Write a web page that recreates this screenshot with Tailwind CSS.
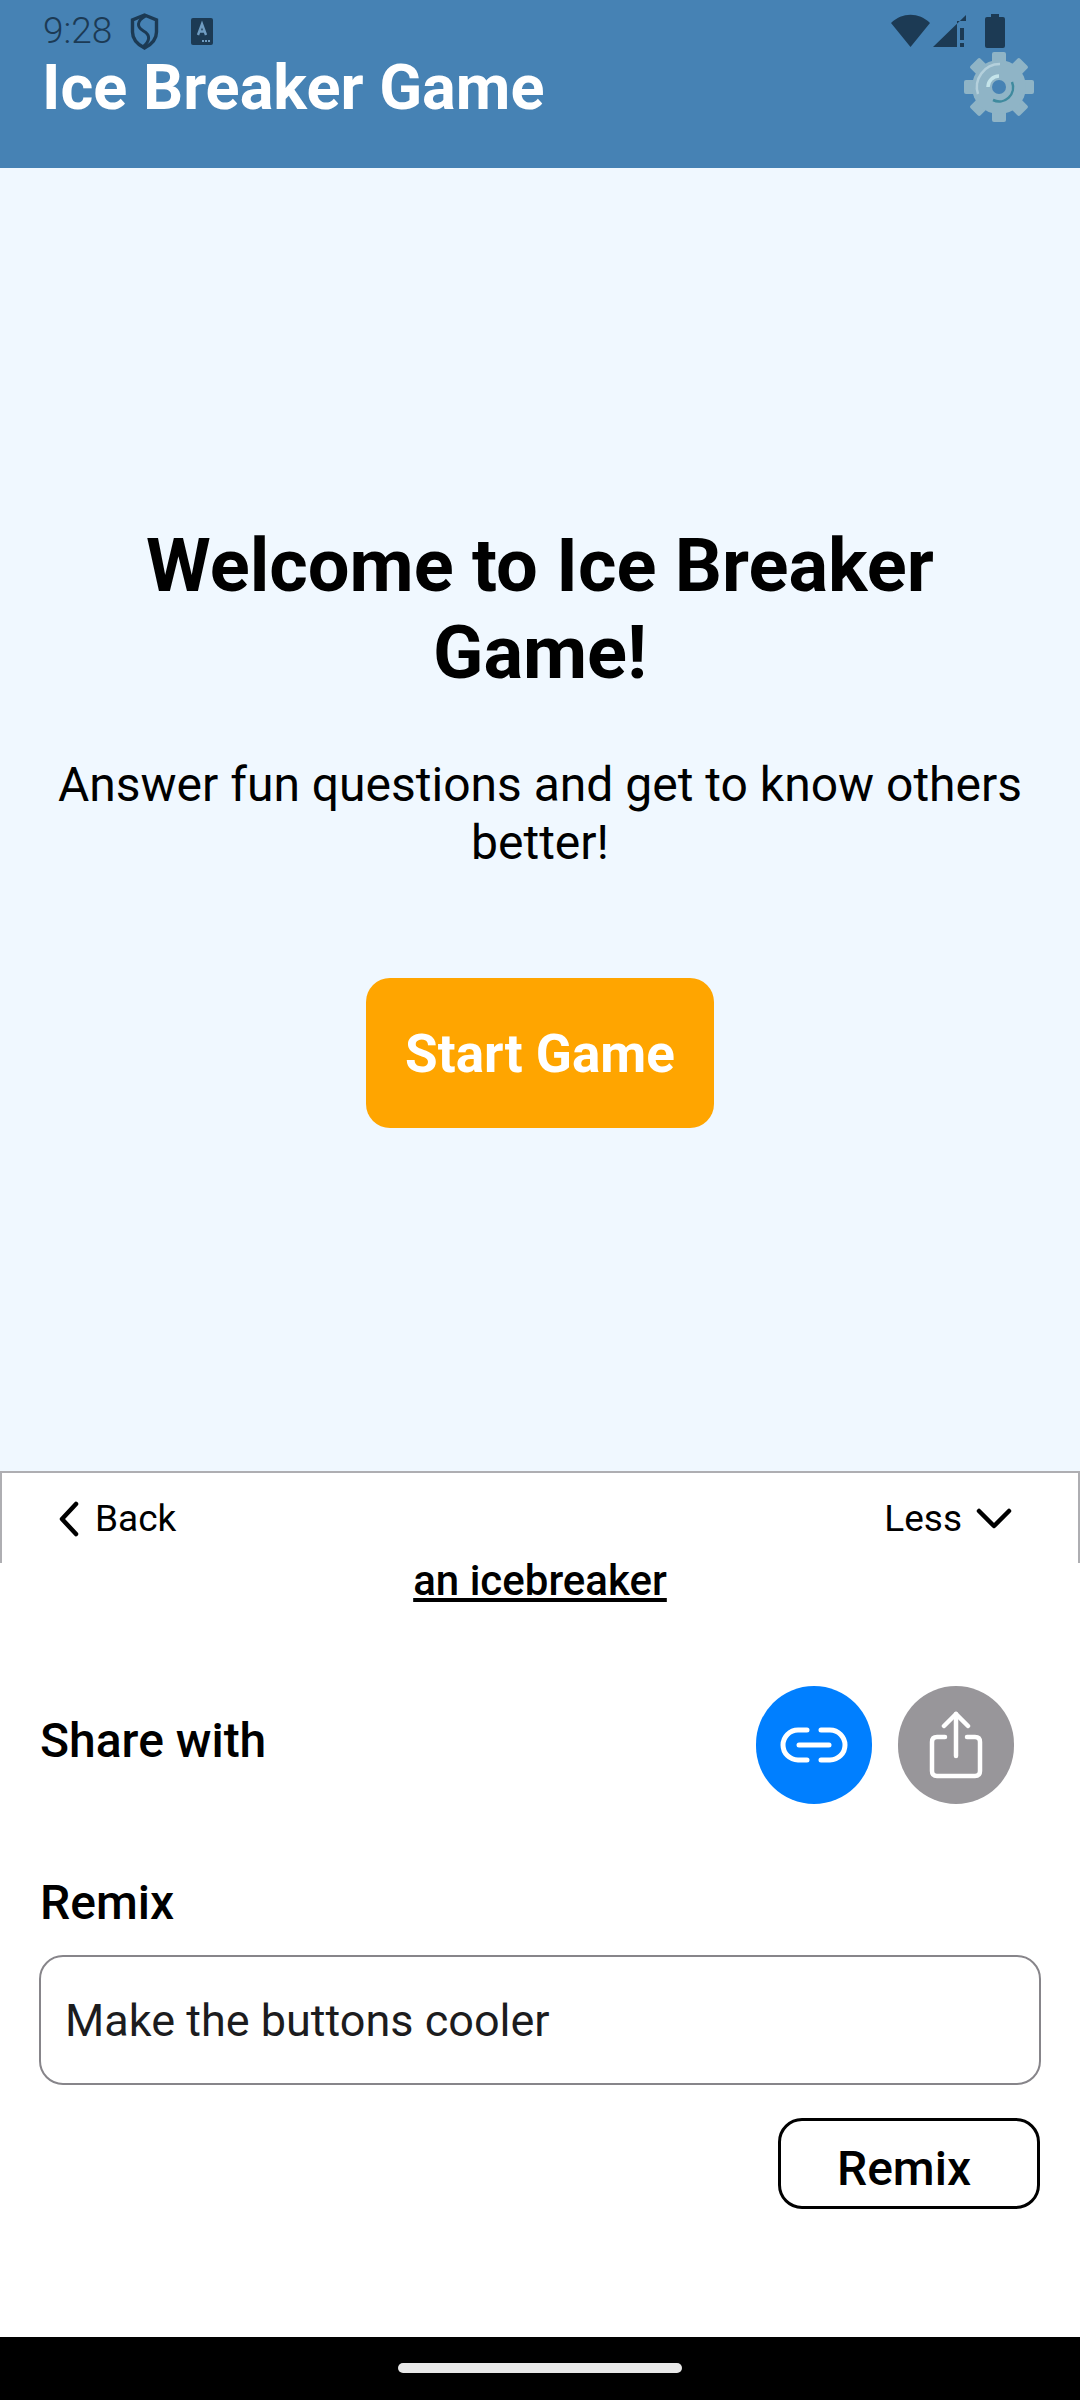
<!DOCTYPE html>
<html>
<head>
<meta charset="utf-8">
<script src="https://cdn.jsdelivr.net/npm/@tailwindcss/browser@4"></script>
</head>
<body class="m-0">
<div class="relative w-[1080px] h-[2400px] flex flex-col bg-white overflow-hidden font-['Roboto',sans-serif] text-black">
  <!-- status bar overlay -->
  <div class="absolute top-0 left-0 w-full h-[60px] text-[#1c3a54]">
    <span class="absolute left-[43px] top-[11px] text-[37px] leading-[40px] font-[350]">9:28</span>
    <svg class="absolute left-[130px] top-[13px]" width="29" height="37" viewBox="0 0 28 37" fill="none" stroke="#1c3a54" stroke-width="3.4"><path d="M14 2 L26 7 V19 C26 27 20 32 14 35 C8 32 2 27 2 19 V7 Z"/><path d="M15 3 C6 8 6 14 13 18 C20 22 20 28 12 34" stroke-width="3"/></svg>
    <svg class="absolute left-[190px] top-[18px]" width="24" height="28" viewBox="0 0 22 28"><rect width="22" height="27" rx="2" fill="#1c3a54"/><path d="M7 17 L11 6 L15 17 M8 13.5 H14" stroke="#6f9cc2" stroke-width="2.4" fill="none"/><rect x="11" y="22" width="2" height="2" fill="#6f9cc2"/><rect x="14" y="22" width="2" height="2" fill="#6f9cc2"/><rect x="17" y="22" width="2" height="2" fill="#6f9cc2"/></svg>
    <svg class="absolute left-[890px] top-[13px]" width="42" height="35" viewBox="0 0 42 35"><path d="M1 10 C12 -1 29 -1 40 10 L20.5 34 Z" fill="#1c3a54"/></svg>
    <svg class="absolute left-[932px] top-[13px]" width="36" height="36" viewBox="0 0 36 36"><path d="M1 34 L34 2 V8 H25 V34 Z" fill="#1c3a54"/><rect x="28" y="15" width="4" height="12" fill="#1c3a54"/><rect x="28" y="30" width="4" height="4" fill="#1c3a54"/></svg>
    <svg class="absolute left-[984px] top-[13px]" width="22" height="36" viewBox="0 0 22 36"><path d="M7 1 H15 V4 H19 Q21 4 21 6 V33 Q21 35 19 35 H3 Q1 35 1 33 V6 Q1 4 3 4 H7 Z" fill="#1c3a54"/></svg>
  </div>

  <!-- header -->
  <header class="h-[168px] shrink-0 bg-[#4682b4] flex justify-between items-start pl-[42px] pr-[46px] pt-[52px]">
    <h1 class="text-[63px] leading-[72px] font-bold text-white m-0">Ice Breaker Game</h1>
    <svg width="70" height="70" viewBox="0 0 70 70">
      <g fill="#8fb4c6">
        <rect x="28" y="0" width="14" height="70" rx="2"/>
        <rect x="28" y="0" width="14" height="70" rx="2" transform="rotate(45 35 35)"/>
        <rect x="28" y="0" width="14" height="70" rx="2" transform="rotate(90 35 35)"/>
        <rect x="28" y="0" width="14" height="70" rx="2" transform="rotate(135 35 35)"/>
        <circle cx="35" cy="35" r="27"/>
      </g>
      <circle cx="35" cy="35" r="7" fill="#4682b4"/>
      <path d="M14 42 A23 23 0 0 1 36 12" fill="none" stroke="#b4d0dc" stroke-width="2.5"/>
      <path d="M24 35 A11 11 0 0 1 35 24" fill="none" stroke="#c4e4ea" stroke-width="3.5"/>
      <path d="M48 30 A14 14 0 0 1 29 48" fill="none" stroke="#3f8a9e" stroke-width="2.5"/>
    </svg>
  </header>

  <!-- main -->
  <main class="h-[1303px] shrink-0 bg-[#f0f8ff] flex flex-col items-center pt-[354px]">
    <h2 class="w-[920px] text-center text-[74px] leading-[87px] font-bold m-0">Welcome to Ice Breaker Game!</h2>
    <p class="w-[1000px] text-center text-[48px] leading-[58px] mt-[60px] m-0">Answer fun questions and get to know others better!</p>
    <button class="mt-[106px] w-[348px] h-[150px] rounded-[24px] bg-[#ffa500] text-white text-[53px] font-bold pt-[3px]">Start Game</button>
  </main>

  <!-- bottom sheet -->
  <section class="grow flex flex-col">
    <div class="h-[92px] shrink-0 border-t-2 border-x-2 border-[#aeaeb2] flex justify-between items-center pl-[56px] pr-[66px] pt-[2px]">
      <div class="flex items-center gap-[15px]">
        <svg width="22" height="36" viewBox="0 0 22 36" fill="none" stroke="#000" stroke-width="4.5" stroke-linecap="round" stroke-linejoin="round"><path d="M18 3 L4 18 L18 33"/></svg>
        <span class="text-[37px] leading-[44px]">Back</span>
      </div>
      <div class="flex items-center gap-[14px]">
        <span class="text-[37px] leading-[44px]">Less</span>
        <svg width="36" height="22" viewBox="0 0 36 22" fill="none" stroke="#000" stroke-width="4.5" stroke-linecap="round" stroke-linejoin="round"><path d="M3 3 L18 18 L33 3"/></svg>
      </div>
    </div>
    <div class="text-center text-[42px] leading-[48px] font-medium underline mt-[-6px]">an icebreaker</div>
    <div class="flex items-center justify-between pl-[40px] pr-[66px] mt-[81px]">
      <span class="text-[48px] leading-[54px] font-medium mt-[-8px]">Share with</span>
      <div class="flex gap-[26px]">
        <div class="w-[116px] h-[118px] rounded-full bg-[#007fff] flex items-center justify-center">
          <svg width="68" height="36" viewBox="0 0 68 36" fill="none" stroke="#fff" stroke-width="5" stroke-linecap="round"><path d="M27 3 H18 A15 15 0 0 0 18 33 H27"/><path d="M41 3 H50 A15 15 0 0 1 50 33 H41"/><path d="M19 18 H49"/></svg>
        </div>
        <div class="w-[116px] h-[118px] rounded-full bg-[#98969a] flex items-center justify-center">
          <svg width="54" height="68" viewBox="0 0 54 68" fill="none" stroke="#fff" stroke-width="4.5" stroke-linecap="round" stroke-linejoin="round"><path d="M27 3 V45"/><path d="M15 15 L27 3 L39 15"/><path d="M16 26 H8 Q3 26 3 31 V60 Q3 65 8 65 H46 Q51 65 51 60 V31 Q51 26 46 26 H38"/></svg>
        </div>
      </div>
    </div>
    <div class="pl-[40px] text-[48px] leading-[54px] font-medium mt-[72px]">Remix</div>
    <div class="mx-[39px] mt-[25px] h-[130px] border-2 border-[#87858a] rounded-[24px] flex items-center pl-[24px] text-[45px] text-[#1c1c1e] pt-[2px]">Make the buttons cooler</div>
    <div class="flex justify-end pr-[40px] mt-[33px]">
      <button class="w-[262px] h-[91px] border-[3px] border-black rounded-[24px] text-[48px] font-medium pr-[10px] pt-[10px]">Remix</button>
    </div>
  </section>

  <!-- nav bar -->
  <footer class="h-[63px] shrink-0 bg-black flex justify-center pt-[26px]">
    <div class="w-[284px] h-[10px] rounded-full bg-[#e8e8e8]"></div>
  </footer>
</div>
</body>
</html>
